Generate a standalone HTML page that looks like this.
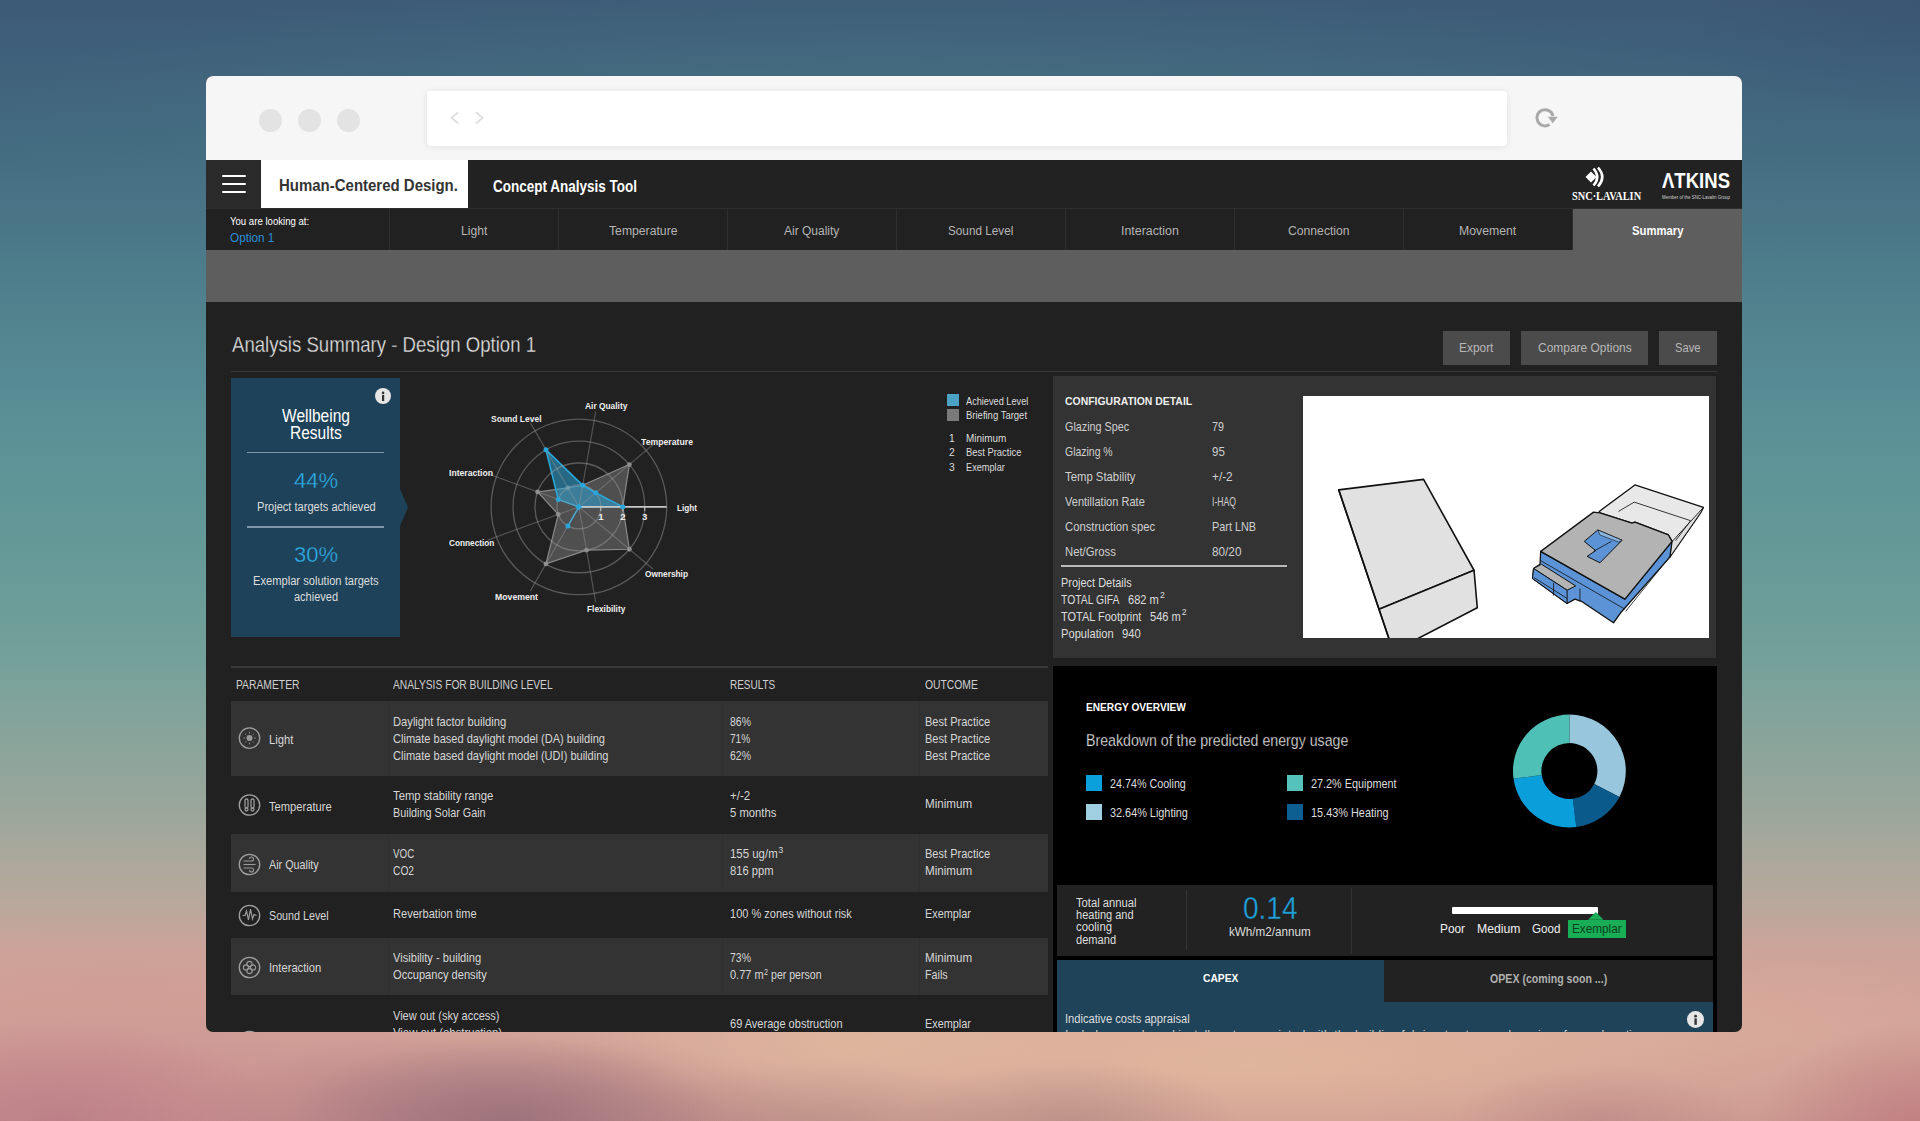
<!DOCTYPE html><html><head><meta charset="utf-8"><style>
html,body{margin:0;padding:0;}
body{width:1920px;height:1121px;overflow:hidden;position:relative;font-family:"Liberation Sans",sans-serif;
background:linear-gradient(180deg,#3d5a76 0px,#42687f 120px,#4e7e8c 280px,#5a9096 420px,#669a98 560px,#72a09a 650px,#84a49b 720px,#98a69b 800px,#a8a89c 850px,#b8a89c 900px,#cca49a 950px,#d2a298 1000px,#d0a098 1040px,#c48e8e 1121px);}
.abs{position:absolute;}
.t{position:absolute;white-space:nowrap;transform-origin:0 0;}
</style></head><body>
<div class="abs" style="left:0;top:0;width:1920px;height:200px;background:radial-gradient(ellipse 900px 150px at 880px 120px,rgba(72,118,134,0.6),rgba(72,118,134,0) 100%),radial-gradient(ellipse 260px 120px at 1920px 0px,rgba(55,82,112,0.55),rgba(55,82,112,0) 100%);"></div>
<div class="abs" style="left:0;top:0;width:1920px;height:1121px;background:radial-gradient(ellipse 900px 140px at 1250px 1065px,rgba(228,186,158,0.85),rgba(228,186,158,0) 100%),radial-gradient(ellipse 260px 90px at 850px 1045px,rgba(224,184,160,0.7),rgba(224,184,160,0) 100%),radial-gradient(ellipse 380px 160px at 120px 1080px,rgba(205,145,145,0.5),rgba(205,145,145,0) 100%);"></div>
<div class="abs" style="left:0;top:0;width:1920px;height:1121px;background:radial-gradient(ellipse 220px 80px at 510px 1118px,rgba(150,110,122,0.7),rgba(150,110,122,0) 100%),radial-gradient(ellipse 320px 90px at 500px 1121px,rgba(165,115,122,0.6),rgba(165,115,122,0) 100%),radial-gradient(ellipse 200px 60px at 820px 1121px,rgba(175,135,130,0.5),rgba(175,135,130,0) 100%),radial-gradient(ellipse 170px 60px at 1070px 1121px,rgba(172,132,128,0.55),rgba(172,132,128,0) 100%),radial-gradient(ellipse 150px 55px at 1600px 1121px,rgba(182,130,130,0.55),rgba(182,130,130,0) 100%),radial-gradient(ellipse 220px 100px at 60px 1121px,rgba(180,115,130,0.55),rgba(180,115,130,0) 100%),radial-gradient(ellipse 160px 100px at 1920px 1121px,rgba(188,118,124,0.65),rgba(188,118,124,0) 100%);"></div>
<div class="abs" style="left:206px;top:76px;width:1536px;height:956px;border-radius:7px;overflow:hidden;background:#212121;"><div class="abs" style="left:-206px;top:-76px;width:1920px;height:1121px;"><div class="abs" style="left:206.00px;top:76.00px;width:1536.00px;height:84.00px;background:#f6f6f6;"></div><div class="abs" style="left:259.0px;top:108.5px;width:23px;height:23px;border-radius:50%;background:#e3e3e3;"></div><div class="abs" style="left:298.0px;top:108.5px;width:23px;height:23px;border-radius:50%;background:#e3e3e3;"></div><div class="abs" style="left:337.0px;top:108.5px;width:23px;height:23px;border-radius:50%;background:#e3e3e3;"></div><div class="abs" style="left:427.00px;top:91.00px;width:1080.00px;height:55.00px;background:#fff;border-radius:4px;box-shadow:0 1px 7px rgba(0,0,0,0.09);"></div><svg class="abs" style="left:0;top:0" width="1920" height="170">
<polyline points="458.3,112.2 451.6,117.75 458.3,123.5" fill="none" stroke="#e0e0e0" stroke-width="2"/>
<polyline points="475.9,112.2 482.6,117.75 475.9,123.5" fill="none" stroke="#e0e0e0" stroke-width="2"/>
<path d="M1549.5,124.5 A8.1,8.1 0 1 1 1552.9,116.0" fill="none" stroke="#a9a9a9" stroke-width="3"/>
<polygon points="1547.9,116.8 1557.8,116.8 1552.7,123.2" fill="#a9a9a9"/>
</svg><div class="abs" style="left:206.00px;top:160.00px;width:1536.00px;height:48.00px;background:#222;"></div><div class="abs" style="left:206.00px;top:160.00px;width:55.00px;height:48.00px;background:#2a2a2a;"></div><div class="abs" style="left:221.50px;top:174.75px;width:24.50px;height:2.50px;background:#fff;border-radius:1px;"></div><div class="abs" style="left:221.50px;top:182.95px;width:24.50px;height:2.50px;background:#fff;border-radius:1px;"></div><div class="abs" style="left:221.50px;top:190.95px;width:24.50px;height:2.50px;background:#fff;border-radius:1px;"></div><div class="abs" style="left:261.00px;top:160.00px;width:207.00px;height:48.00px;background:#fff;"></div><svg class="abs" style="left:1560px;top:160px" width="182" height="48">
<polygon points="25.5,17 31,11.5 36.5,17 31,22.5" fill="#fff"/>
<path d="M33.5,8.5 Q41,17 33.5,25.5" fill="none" stroke="#fff" stroke-width="2.6"/>
<path d="M38,7.5 Q46.5,17 38,26.5" fill="none" stroke="#fff" stroke-width="2.6"/>
</svg><div class="abs" style="left:206.00px;top:208.00px;width:1536.00px;height:42.00px;background:#212121;"></div><div class="abs" style="left:389.00px;top:208.00px;width:1.00px;height:42.00px;background:#2e2e2e;"></div><div class="abs" style="left:558.00px;top:208.00px;width:1.00px;height:42.00px;background:#2e2e2e;"></div><div class="abs" style="left:727.00px;top:208.00px;width:1.00px;height:42.00px;background:#2e2e2e;"></div><div class="abs" style="left:896.00px;top:208.00px;width:1.00px;height:42.00px;background:#2e2e2e;"></div><div class="abs" style="left:1065.00px;top:208.00px;width:1.00px;height:42.00px;background:#2e2e2e;"></div><div class="abs" style="left:1234.00px;top:208.00px;width:1.00px;height:42.00px;background:#2e2e2e;"></div><div class="abs" style="left:1403.00px;top:208.00px;width:1.00px;height:42.00px;background:#2e2e2e;"></div><div class="abs" style="left:1572.00px;top:208.00px;width:1.00px;height:42.00px;background:#2e2e2e;"></div><div class="abs" style="left:1573.00px;top:208.80px;width:169.00px;height:41.20px;background:#5e5e5e;"></div><div class="abs" style="left:206.00px;top:250.00px;width:1536.00px;height:52.00px;background:#5e5e5e;"></div><div class="abs" style="left:206.00px;top:207.60px;width:1536.00px;height:1.20px;background:#2e2e2e;"></div><div class="abs" style="left:231.00px;top:370.50px;width:1486.00px;height:1.50px;background:#383838;"></div><div class="abs" style="left:1443.30px;top:331.25px;width:67.20px;height:33.75px;background:#4b4b4b;"></div><div class="abs" style="left:1521.00px;top:331.25px;width:126.70px;height:33.75px;background:#4b4b4b;"></div><div class="abs" style="left:1658.60px;top:331.25px;width:58.40px;height:33.75px;background:#4b4b4b;"></div><div class="abs" style="left:231.00px;top:378.00px;width:169.30px;height:258.80px;background:#1e4259;"></div><svg class="abs" style="left:395px;top:485px" width="20" height="45"><polygon points="5,4 13,22.6 5,41" fill="#1e4259"/></svg><div class="abs" style="left:246.70px;top:451.90px;width:137.60px;height:1.50px;background:#7f97a6;"></div><div class="abs" style="left:246.70px;top:526.10px;width:137.60px;height:1.50px;background:#7f97a6;"></div><div class="abs" style="left:375px;top:387.8px;width:16.2px;height:16.2px;border-radius:50%;background:#e6e6e6;"></div><svg class="abs" style="left:375px;top:387.8px" width="17" height="17"><circle cx="8.1" cy="4.9" r="1.3" fill="#333"/><rect x="7.0" y="7" width="2.2" height="6" fill="#333"/></svg><svg class="abs" style="left:0;top:0" width="1920" height="700"><polygon points="622.80,506.90 629.34,464.57 582.71,485.28 567.92,487.89 537.65,491.89 558.27,514.41 545.97,563.93 586.52,550.13 629.34,549.23" fill="rgba(150,150,150,0.40)" stroke="#8a8a8a" stroke-width="1.2"/><circle cx="622.80" cy="506.90" r="2.4" fill="#8a8a8a"/><circle cx="629.34" cy="464.57" r="2.4" fill="#8a8a8a"/><circle cx="582.71" cy="485.28" r="2.4" fill="#8a8a8a"/><circle cx="567.92" cy="487.89" r="2.4" fill="#8a8a8a"/><circle cx="537.65" cy="491.89" r="2.4" fill="#8a8a8a"/><circle cx="558.27" cy="514.41" r="2.4" fill="#8a8a8a"/><circle cx="545.97" cy="563.93" r="2.4" fill="#8a8a8a"/><circle cx="586.52" cy="550.13" r="2.4" fill="#8a8a8a"/><circle cx="629.34" cy="549.23" r="2.4" fill="#8a8a8a"/><polygon points="622.80,506.90 595.71,492.79 582.71,485.28 545.98,449.87 558.27,499.39 578.90,506.90 567.92,525.91 578.90,506.90 578.90,506.90" fill="rgba(45,165,215,0.55)" stroke="#2aa6da" stroke-width="1.6"/><circle cx="578.9" cy="506.9" r="21.95" fill="none" stroke="rgba(160,160,160,0.45)" stroke-width="1.3"/><circle cx="578.9" cy="506.9" r="43.90" fill="none" stroke="rgba(160,160,160,0.45)" stroke-width="1.3"/><circle cx="578.9" cy="506.9" r="65.85" fill="none" stroke="rgba(160,160,160,0.45)" stroke-width="1.3"/><circle cx="578.9" cy="506.9" r="87.80" fill="none" stroke="rgba(160,160,160,0.45)" stroke-width="1.3"/><line x1="578.9" y1="506.9" x2="653.21" y2="444.55" stroke="rgba(150,150,150,0.42)" stroke-width="1.2"/><line x1="578.9" y1="506.9" x2="595.74" y2="411.37" stroke="rgba(150,150,150,0.42)" stroke-width="1.2"/><line x1="578.9" y1="506.9" x2="530.40" y2="422.90" stroke="rgba(150,150,150,0.42)" stroke-width="1.2"/><line x1="578.9" y1="506.9" x2="487.75" y2="473.72" stroke="rgba(150,150,150,0.42)" stroke-width="1.2"/><line x1="578.9" y1="506.9" x2="487.75" y2="540.08" stroke="rgba(150,150,150,0.42)" stroke-width="1.2"/><line x1="578.9" y1="506.9" x2="530.40" y2="590.90" stroke="rgba(150,150,150,0.42)" stroke-width="1.2"/><line x1="578.9" y1="506.9" x2="595.74" y2="602.43" stroke="rgba(150,150,150,0.42)" stroke-width="1.2"/><line x1="578.9" y1="506.9" x2="653.21" y2="569.25" stroke="rgba(150,150,150,0.42)" stroke-width="1.2"/><line x1="578.9" y1="506.9" x2="666.70" y2="506.9" stroke="#c8c8c8" stroke-width="1.6"/><line x1="600.85" y1="506.9" x2="600.85" y2="510.9" stroke="#c8c8c8" stroke-width="1"/><line x1="622.80" y1="506.9" x2="622.80" y2="510.9" stroke="#c8c8c8" stroke-width="1"/><line x1="644.75" y1="506.9" x2="644.75" y2="510.9" stroke="#c8c8c8" stroke-width="1"/><circle cx="622.80" cy="506.90" r="2.5" fill="#2aa6da"/><circle cx="595.71" cy="492.79" r="2.5" fill="#2aa6da"/><circle cx="582.71" cy="485.28" r="2.5" fill="#2aa6da"/><circle cx="545.98" cy="449.87" r="2.5" fill="#2aa6da"/><circle cx="558.27" cy="499.39" r="2.5" fill="#2aa6da"/><circle cx="578.90" cy="506.90" r="2.5" fill="#2aa6da"/><circle cx="567.92" cy="525.91" r="2.5" fill="#2aa6da"/><circle cx="578.90" cy="506.90" r="2.5" fill="#2aa6da"/><circle cx="578.90" cy="506.90" r="2.5" fill="#2aa6da"/></svg><div class="abs" style="left:947.00px;top:394.00px;width:12.00px;height:12.00px;background:#4aa3c4;"></div><div class="abs" style="left:947.00px;top:409.00px;width:12.00px;height:11.60px;background:#7a7a7a;"></div><div class="abs" style="left:1052.80px;top:376.00px;width:663.20px;height:282.00px;background:#333;"></div><div class="abs" style="left:1061.00px;top:564.50px;width:225.70px;height:2.00px;background:#b9b9b9;"></div><div class="abs" style="left:1302.80px;top:395.50px;width:406.70px;height:242.50px;background:#fff;"></div><svg class="abs" style="left:0;top:0" width="1920" height="700"><defs><clipPath id="imgclip"><rect x="1302.8" y="395.5" width="406.7" height="242.5"/></clipPath></defs><g clip-path="url(#imgclip)"><polygon points="1338.69,489.86 1423.58,479.38 1474.02,570.26 1379.01,609.21" fill="#e1e1e1" stroke="#111" stroke-width="1.6" stroke-linejoin="round"/><polygon points="1379.01,609.21 1474.02,570.26 1477.27,607.72 1372.40,662.15 1396.87,662.15" fill="#e1e1e1" stroke="#111" stroke-width="1.6" stroke-linejoin="round"/><line x1="1338.69" y1="489.86" x2="1396.87" y2="662.15" stroke="#111" stroke-width="1.6"/><polygon points="1599.23,511.40 1634.92,484.99 1703.44,507.40 1700.59,512.83 1669.89,557.08 1672.03,541.38 1668.47,534.95 1634.92,522.11 1632.06,523.10 1599.94,512.83" fill="#e8e8e8" stroke="#111" stroke-width="1.3" stroke-linejoin="round"/><polygon points="1703.44,507.40 1700.59,512.83 1669.89,557.08 1671.61,542.09 1690.59,521.39" fill="#dedede" stroke="#111" stroke-width="0.9" stroke-linejoin="round"/><polyline points="1618.50,511.40 1634.20,502.12 1690.59,520.68 1675.60,540.66" fill="none" stroke="#222" stroke-width="0.9"/><polygon points="1540.70,551.37 1624.93,599.19 1672.03,541.38 1669.89,557.08 1620.64,612.76 1613.50,622.75 1581.38,601.33 1577.10,599.91 1574.96,599.19 1567.11,603.48 1532.56,578.49 1533.56,568.50 1539.99,564.22" fill="#5b93d6" stroke="#111" stroke-width="1.3" stroke-linejoin="round"/><polygon points="1533.56,568.50 1541.41,564.22 1575.67,585.92 1567.11,590.20" fill="#b4b4b4" stroke="#111" stroke-width="1.0" stroke-linejoin="round"/><polygon points="1533.56,568.50 1567.11,590.20 1567.11,603.48 1532.56,578.49" fill="#5b93d6" stroke="#111" stroke-width="1.0" stroke-linejoin="round"/><polygon points="1540.70,551.37 1593.52,512.11 1599.94,512.83 1632.06,523.10 1634.92,522.11 1668.47,534.95 1672.03,541.38 1624.93,599.19" fill="#b3b3b3" stroke="#111" stroke-width="1.3" stroke-linejoin="round"/><polygon points="1584.24,541.38 1597.80,529.96 1622.07,540.24 1599.94,562.79 1587.09,556.37 1595.66,550.66" fill="#5b93d6" stroke="#111" stroke-width="1.0" stroke-linejoin="round"/><polygon points="1597.80,529.96 1622.07,540.24 1618.50,542.09 1599.94,534.95" fill="#8db5e2" stroke="#111" stroke-width="0.6" stroke-linejoin="round"/><g stroke="#111" stroke-width="0.8" fill="none"><line x1="1540.70" y1="560.65" x2="1624.93" y2="609.19"/><line x1="1553.55" y1="582.78" x2="1553.55" y2="595.62"/><line x1="1579.96" y1="588.49" x2="1579.96" y2="601.33"/><line x1="1534.28" y1="577.78" x2="1567.11" y2="598.48"/><line x1="1625.64" y1="611.33" x2="1670.61" y2="555.65"/><line x1="1593.52" y1="551.37" x2="1611.36" y2="541.38"/></g></g></g></svg><div class="abs" style="left:1052.80px;top:666.00px;width:663.90px;height:366.00px;background:#000;"></div><div class="abs" style="left:1085.90px;top:775.30px;width:16.00px;height:16.00px;background:#0aa0dc;"></div><div class="abs" style="left:1085.90px;top:804.40px;width:16.00px;height:16.00px;background:#a0cfe1;"></div><div class="abs" style="left:1286.90px;top:775.30px;width:16.00px;height:16.00px;background:#55c3bc;"></div><div class="abs" style="left:1286.90px;top:804.40px;width:16.00px;height:16.00px;background:#0c5f90;"></div><svg class="abs" style="left:0;top:0" width="1920" height="900"><path d="M1569.40,714.60 A56.4,56.4 0 0 1 1619.43,797.04 L1594.24,783.93 A28,28 0 0 0 1569.40,743.00 Z" fill="#98c6dc"/><path d="M1619.43,797.04 A56.4,56.4 0 0 1 1576.27,826.98 L1572.81,798.79 A28,28 0 0 0 1594.24,783.93 Z" fill="#0b5a8c"/><path d="M1576.27,826.98 A56.4,56.4 0 0 1 1513.55,778.85 L1541.67,774.90 A28,28 0 0 0 1572.81,798.79 Z" fill="#0a9edb"/><path d="M1513.55,778.85 A56.4,56.4 0 0 1 1569.40,714.60 L1569.40,743.00 A28,28 0 0 0 1541.67,774.90 Z" fill="#4fc0b6"/></svg><div class="abs" style="left:1057.00px;top:884.50px;width:656.00px;height:71.50px;background:#222;"></div><div class="abs" style="left:1185.60px;top:890.00px;width:1.20px;height:60.00px;background:#333;"></div><div class="abs" style="left:1350.70px;top:887.50px;width:1.20px;height:65.00px;background:#333;"></div><div class="abs" style="left:1452.00px;top:907.30px;width:145.80px;height:6.70px;background:#fff;border-radius:1px;"></div><svg class="abs" style="left:1580px;top:905px" width="30" height="20"><polygon points="8,14.8 15.8,7 23.6,14.8" fill="#19ad55"/></svg><div class="abs" style="left:1567.70px;top:919.80px;width:58.30px;height:18.00px;background:#19ad55;"></div><div class="abs" style="left:1057.00px;top:959.80px;width:327.30px;height:72.20px;background:#1f4359;"></div><div class="abs" style="left:1384.30px;top:959.80px;width:328.70px;height:42.20px;background:#222;"></div><div class="abs" style="left:1384.30px;top:1002.00px;width:328.70px;height:30.00px;background:#1f4359;"></div><div class="abs" style="left:1686.7px;top:1010.9px;width:17.2px;height:17.2px;border-radius:50%;background:#e6e6e6;"></div><svg class="abs" style="left:1686.7px;top:1010.9px" width="18" height="18"><circle cx="8.6" cy="5.2" r="1.4" fill="#333"/><rect x="7.4" y="7.4" width="2.4" height="6.4" fill="#333"/></svg><div class="abs" style="left:231.00px;top:666.20px;width:816.70px;height:1.80px;background:#383838;"></div><div class="abs" style="left:231.00px;top:701.00px;width:816.70px;height:75.00px;background:#333;"></div><div class="abs" style="left:388.00px;top:701.00px;width:1.00px;height:75.00px;background:#2f2f2f;"></div><div class="abs" style="left:722.00px;top:701.00px;width:1.00px;height:75.00px;background:#303030;"></div><div class="abs" style="left:919.00px;top:701.00px;width:1.00px;height:75.00px;background:#2f2f2f;"></div><div class="abs" style="left:231.00px;top:834.00px;width:816.70px;height:58.00px;background:#333;"></div><div class="abs" style="left:388.00px;top:834.00px;width:1.00px;height:58.00px;background:#2f2f2f;"></div><div class="abs" style="left:722.00px;top:834.00px;width:1.00px;height:58.00px;background:#303030;"></div><div class="abs" style="left:919.00px;top:834.00px;width:1.00px;height:58.00px;background:#2f2f2f;"></div><div class="abs" style="left:231.00px;top:938.00px;width:816.70px;height:57.40px;background:#333;"></div><div class="abs" style="left:388.00px;top:938.00px;width:1.00px;height:57.40px;background:#2f2f2f;"></div><div class="abs" style="left:722.00px;top:938.00px;width:1.00px;height:57.40px;background:#303030;"></div><div class="abs" style="left:919.00px;top:938.00px;width:1.00px;height:57.40px;background:#2f2f2f;"></div><svg class="abs" style="left:0;top:0" width="1920" height="1100"><circle cx="249.5" cy="738.1" r="10.2" fill="none" stroke="#a0a0a0" stroke-width="1.3"/><circle cx="249.5" cy="805" r="10.2" fill="none" stroke="#a0a0a0" stroke-width="1.3"/><circle cx="249.5" cy="864.5" r="10.2" fill="none" stroke="#a0a0a0" stroke-width="1.3"/><circle cx="249.5" cy="915.5" r="10.2" fill="none" stroke="#a0a0a0" stroke-width="1.3"/><circle cx="249.5" cy="967.5" r="10.2" fill="none" stroke="#a0a0a0" stroke-width="1.3"/><circle cx="249.5" cy="1041.5" r="10.2" fill="none" stroke="#a0a0a0" stroke-width="1.3"/><circle cx="249.5" cy="738.1" r="3" fill="#9a9a9a"/><line x1="254.00" y1="738.10" x2="255.70" y2="738.10" stroke="#8c8c8c" stroke-width="1"/><line x1="252.68" y1="741.28" x2="253.88" y2="742.48" stroke="#8c8c8c" stroke-width="1"/><line x1="249.50" y1="742.60" x2="249.50" y2="744.30" stroke="#8c8c8c" stroke-width="1"/><line x1="246.32" y1="741.28" x2="245.12" y2="742.48" stroke="#8c8c8c" stroke-width="1"/><line x1="245.00" y1="738.10" x2="243.30" y2="738.10" stroke="#8c8c8c" stroke-width="1"/><line x1="246.32" y1="734.92" x2="245.12" y2="733.72" stroke="#8c8c8c" stroke-width="1"/><line x1="249.50" y1="733.60" x2="249.50" y2="731.90" stroke="#8c8c8c" stroke-width="1"/><line x1="252.68" y1="734.92" x2="253.88" y2="733.72" stroke="#8c8c8c" stroke-width="1"/><g fill="none" stroke="#9a9a9a" stroke-width="1.3"><rect x="245" y="799" width="3" height="9" rx="1.5"/><rect x="251" y="799" width="3" height="9" rx="1.5"/><circle cx="246.5" cy="809.5" r="1.5"/><circle cx="252.5" cy="809.5" r="1.5"/></g><g fill="none" stroke="#9a9a9a" stroke-width="1.1"><path d="M243.5,861 h8 a2,2 0 1 0 -2,-2"/><path d="M243.5,864.5 h12"/><path d="M243.5,868 h8 a2,2 0 1 1 -2,2"/></g><polyline points="242.5,915.5 245,915.5 246.5,911 248.5,920 250.5,909 252.5,919 254,914.5 256.5,915.5" fill="none" stroke="#9a9a9a" stroke-width="1.2"/><g fill="none" stroke="#9a9a9a" stroke-width="1.1"><circle cx="249.5" cy="964" r="2.6"/><circle cx="249.5" cy="971" r="2.6"/><circle cx="246" cy="967.5" r="2.6"/><circle cx="253" cy="967.5" r="2.6"/></g></svg><span class="t" style="left:278.75px;top:177.56px;font:700 15.99px/1 'Liberation Sans',sans-serif;color:#333;transform:scaleX(0.9370);">Human-Centered Design.</span>
<span class="t" style="left:492.70px;top:178.61px;font:700 15.99px/1 'Liberation Sans',sans-serif;color:#fff;transform:scaleX(0.8447);">Concept Analysis Tool</span>
<span class="t" style="left:1572.00px;top:190.82px;font:700 11.91px/1 'Liberation Serif',sans-serif;color:#fff;transform:scaleX(0.8677);">SNC·LAVALIN</span>
<span class="t" style="left:1662.00px;top:170.44px;font:700 21.80px/1 'Liberation Sans',sans-serif;color:#fff;transform:scaleX(0.8508);">ΛTKINS</span>
<span class="t" style="left:1662.00px;top:196.46px;font:400 4.65px/1 'Liberation Sans',sans-serif;color:#cfcfcf;transform:scaleX(0.9518);">Member of the SNC-Lavalin Group</span>
<span class="t" style="left:230.20px;top:216.42px;font:400 10.61px/1 'Liberation Sans',sans-serif;color:#fff;transform:scaleX(0.9052);">You are looking at:</span>
<span class="t" style="left:230.20px;top:231.65px;font:400 12.94px/1 'Liberation Sans',sans-serif;color:#2a8fd6;transform:scaleX(0.9069);">Option 1</span>
<span class="t" style="left:460.88px;top:223.83px;font:400 13.66px/1 'Liberation Sans',sans-serif;color:#b4b4b4;transform:scaleX(0.8864);">Light</span>
<span class="t" style="left:608.75px;top:223.83px;font:400 13.66px/1 'Liberation Sans',sans-serif;color:#b4b4b4;transform:scaleX(0.8935);">Temperature</span>
<span class="t" style="left:784.35px;top:223.83px;font:400 13.66px/1 'Liberation Sans',sans-serif;color:#b4b4b4;transform:scaleX(0.8780);">Air Quality</span>
<span class="t" style="left:948.35px;top:223.83px;font:400 13.66px/1 'Liberation Sans',sans-serif;color:#b4b4b4;transform:scaleX(0.8600);">Sound Level</span>
<span class="t" style="left:1121.10px;top:223.83px;font:400 13.66px/1 'Liberation Sans',sans-serif;color:#b4b4b4;transform:scaleX(0.9064);">Interaction</span>
<span class="t" style="left:1288.20px;top:223.83px;font:400 13.66px/1 'Liberation Sans',sans-serif;color:#b4b4b4;transform:scaleX(0.8916);">Connection</span>
<span class="t" style="left:1459.40px;top:223.83px;font:400 13.66px/1 'Liberation Sans',sans-serif;color:#b4b4b4;transform:scaleX(0.8972);">Movement</span>
<span class="t" style="left:1632.25px;top:223.83px;font:700 13.66px/1 'Liberation Sans',sans-serif;color:#fff;transform:scaleX(0.8274);">Summary</span>
<span class="t" style="left:231.70px;top:334.51px;font:400 21.37px/1 'Liberation Sans',sans-serif;color:#e2e2e2;transform:scaleX(0.8711);-webkit-text-stroke:0.3px #212121;">Analysis Summary - Design Option 1</span>
<span class="t" style="left:1459.40px;top:342.32px;font:400 12.50px/1 'Liberation Sans',sans-serif;color:#b8b8b8;transform:scaleX(0.9522);">Export</span>
<span class="t" style="left:1537.50px;top:342.32px;font:400 12.50px/1 'Liberation Sans',sans-serif;color:#b8b8b8;transform:scaleX(0.9570);">Compare Options</span>
<span class="t" style="left:1675.00px;top:342.32px;font:400 12.50px/1 'Liberation Sans',sans-serif;color:#b8b8b8;transform:scaleX(0.8985);">Save</span>
<span class="t" style="left:282.20px;top:408.33px;font:400 17.44px/1 'Liberation Sans',sans-serif;color:#fff;transform:scaleX(0.8917);">Wellbeing</span>
<span class="t" style="left:290.35px;top:424.73px;font:400 17.44px/1 'Liberation Sans',sans-serif;color:#fff;transform:scaleX(0.8892);">Results</span>
<span class="t" style="left:293.90px;top:468.86px;font:400 22.97px/1 'Liberation Sans',sans-serif;color:#2eb0ea;transform:scaleX(0.9578);-webkit-text-stroke:0.35px #1e4259;">44%</span>
<span class="t" style="left:256.65px;top:499.82px;font:400 13.08px/1 'Liberation Sans',sans-serif;color:#ddd;transform:scaleX(0.8460);">Project targets achieved</span>
<span class="t" style="left:293.90px;top:542.86px;font:400 22.97px/1 'Liberation Sans',sans-serif;color:#2eb0ea;transform:scaleX(0.9578);-webkit-text-stroke:0.35px #1e4259;">30%</span>
<span class="t" style="left:253.15px;top:573.92px;font:400 13.08px/1 'Liberation Sans',sans-serif;color:#ddd;transform:scaleX(0.8518);">Exemplar solution targets</span>
<span class="t" style="left:293.90px;top:590.22px;font:400 13.08px/1 'Liberation Sans',sans-serif;color:#ddd;transform:scaleX(0.8405);">achieved</span>
<span class="t" style="left:584.60px;top:401.43px;font:700 9.88px/1 'Liberation Sans',sans-serif;color:#eee;transform:scaleX(0.8491);">Air Quality</span>
<span class="t" style="left:491.00px;top:413.93px;font:700 9.88px/1 'Liberation Sans',sans-serif;color:#eee;transform:scaleX(0.8619);">Sound Level</span>
<span class="t" style="left:641.00px;top:436.93px;font:700 9.88px/1 'Liberation Sans',sans-serif;color:#eee;transform:scaleX(0.8801);">Temperature</span>
<span class="t" style="left:449.00px;top:467.93px;font:700 9.88px/1 'Liberation Sans',sans-serif;color:#eee;transform:scaleX(0.8716);">Interaction</span>
<span class="t" style="left:677.00px;top:503.43px;font:700 9.88px/1 'Liberation Sans',sans-serif;color:#eee;transform:scaleX(0.8289);">Light</span>
<span class="t" style="left:448.60px;top:537.93px;font:700 9.88px/1 'Liberation Sans',sans-serif;color:#eee;transform:scaleX(0.8360);">Connection</span>
<span class="t" style="left:645.00px;top:568.93px;font:700 9.88px/1 'Liberation Sans',sans-serif;color:#eee;transform:scaleX(0.8427);">Ownership</span>
<span class="t" style="left:495.00px;top:591.93px;font:700 9.88px/1 'Liberation Sans',sans-serif;color:#eee;transform:scaleX(0.8805);">Movement</span>
<span class="t" style="left:586.75px;top:603.93px;font:700 9.88px/1 'Liberation Sans',sans-serif;color:#eee;transform:scaleX(0.8409);">Flexibility</span>
<span class="t" style="left:598.19px;top:512.38px;font:700 9.59px/1 'Liberation Sans',sans-serif;color:#eee;">1</span>
<span class="t" style="left:620.14px;top:512.38px;font:700 9.59px/1 'Liberation Sans',sans-serif;color:#eee;">2</span>
<span class="t" style="left:642.09px;top:512.38px;font:700 9.59px/1 'Liberation Sans',sans-serif;color:#eee;">3</span>
<span class="t" style="left:965.70px;top:396.76px;font:400 10.32px/1 'Liberation Sans',sans-serif;color:#ddd;transform:scaleX(0.8907);">Achieved Level</span>
<span class="t" style="left:965.70px;top:411.16px;font:400 10.32px/1 'Liberation Sans',sans-serif;color:#ddd;transform:scaleX(0.9204);">Briefing Target</span>
<span class="t" style="left:949.00px;top:433.76px;font:400 10.32px/1 'Liberation Sans',sans-serif;color:#ddd;">1</span>
<span class="t" style="left:965.70px;top:433.76px;font:400 10.32px/1 'Liberation Sans',sans-serif;color:#ddd;transform:scaleX(0.9612);">Minimum</span>
<span class="t" style="left:949.00px;top:448.26px;font:400 10.32px/1 'Liberation Sans',sans-serif;color:#ddd;">2</span>
<span class="t" style="left:965.70px;top:448.26px;font:400 10.32px/1 'Liberation Sans',sans-serif;color:#ddd;transform:scaleX(0.9119);">Best Practice</span>
<span class="t" style="left:949.00px;top:462.76px;font:400 10.32px/1 'Liberation Sans',sans-serif;color:#ddd;">3</span>
<span class="t" style="left:965.70px;top:462.76px;font:400 10.32px/1 'Liberation Sans',sans-serif;color:#ddd;transform:scaleX(0.8908);">Exemplar</span>
<span class="t" style="left:1064.75px;top:395.05px;font:700 11.63px/1 'Liberation Sans',sans-serif;color:#eee;transform:scaleX(0.8979);">CONFIGURATION DETAIL</span>
<span class="t" style="left:1064.75px;top:420.73px;font:400 12.72px/1 'Liberation Sans',sans-serif;color:#cfcfcf;transform:scaleX(0.8471);">Glazing Spec</span>
<span class="t" style="left:1211.90px;top:420.73px;font:400 12.72px/1 'Liberation Sans',sans-serif;color:#cfcfcf;transform:scaleX(0.8422);">79</span>
<span class="t" style="left:1064.75px;top:445.73px;font:400 12.72px/1 'Liberation Sans',sans-serif;color:#cfcfcf;transform:scaleX(0.8222);">Glazing %</span>
<span class="t" style="left:1211.90px;top:445.73px;font:400 12.72px/1 'Liberation Sans',sans-serif;color:#cfcfcf;transform:scaleX(0.9059);">95</span>
<span class="t" style="left:1064.75px;top:470.73px;font:400 12.72px/1 'Liberation Sans',sans-serif;color:#cfcfcf;transform:scaleX(0.8903);">Temp Stability</span>
<span class="t" style="left:1211.90px;top:470.73px;font:400 12.72px/1 'Liberation Sans',sans-serif;color:#cfcfcf;transform:scaleX(0.9261);">+/-2</span>
<span class="t" style="left:1064.75px;top:495.73px;font:400 12.72px/1 'Liberation Sans',sans-serif;color:#cfcfcf;transform:scaleX(0.8681);">Ventillation Rate</span>
<span class="t" style="left:1211.90px;top:495.73px;font:400 12.72px/1 'Liberation Sans',sans-serif;color:#cfcfcf;transform:scaleX(0.6801);">I-HAQ</span>
<span class="t" style="left:1064.75px;top:520.73px;font:400 12.72px/1 'Liberation Sans',sans-serif;color:#cfcfcf;transform:scaleX(0.8852);">Construction spec</span>
<span class="t" style="left:1211.90px;top:520.73px;font:400 12.72px/1 'Liberation Sans',sans-serif;color:#cfcfcf;transform:scaleX(0.8537);">Part LNB</span>
<span class="t" style="left:1064.75px;top:545.73px;font:400 12.72px/1 'Liberation Sans',sans-serif;color:#cfcfcf;transform:scaleX(0.8885);">Net/Gross</span>
<span class="t" style="left:1211.90px;top:545.73px;font:400 12.72px/1 'Liberation Sans',sans-serif;color:#cfcfcf;transform:scaleX(0.9249);">80/20</span>
<span class="t" style="left:1060.90px;top:577.14px;font:400 12.35px/1 'Liberation Sans',sans-serif;color:#ddd;transform:scaleX(0.8872);">Project Details</span>
<span class="t" style="left:1060.90px;top:593.74px;font:400 12.35px/1 'Liberation Sans',sans-serif;color:#ddd;transform:scaleX(0.8391);">TOTAL GIFA</span>
<span class="t" style="left:1128.30px;top:593.74px;font:400 12.35px/1 'Liberation Sans',sans-serif;color:#ddd;transform:scaleX(0.8978);">682 m</span>
<span class="t" style="left:1159.90px;top:591.02px;font:400 8.72px/1 'Liberation Sans',sans-serif;color:#ddd;">2</span>
<span class="t" style="left:1060.90px;top:610.64px;font:400 12.35px/1 'Liberation Sans',sans-serif;color:#ddd;transform:scaleX(0.8900);">TOTAL Footprint</span>
<span class="t" style="left:1150.25px;top:610.64px;font:400 12.35px/1 'Liberation Sans',sans-serif;color:#ddd;transform:scaleX(0.8978);">546 m</span>
<span class="t" style="left:1181.80px;top:607.92px;font:400 8.72px/1 'Liberation Sans',sans-serif;color:#ddd;">2</span>
<span class="t" style="left:1060.90px;top:628.04px;font:400 12.35px/1 'Liberation Sans',sans-serif;color:#ddd;transform:scaleX(0.9034);">Population</span>
<span class="t" style="left:1122.20px;top:628.04px;font:400 12.35px/1 'Liberation Sans',sans-serif;color:#ddd;transform:scaleX(0.9080);">940</span>
<span class="t" style="left:1085.90px;top:700.63px;font:700 11.77px/1 'Liberation Sans',sans-serif;color:#fff;transform:scaleX(0.8609);">ENERGY OVERVIEW</span>
<span class="t" style="left:1085.90px;top:731.80px;font:400 16.35px/1 'Liberation Sans',sans-serif;color:#e2e2e2;transform:scaleX(0.8669);-webkit-text-stroke:0.25px #000;">Breakdown of the predicted energy usage</span>
<span class="t" style="left:1110.25px;top:777.85px;font:400 12.94px/1 'Liberation Sans',sans-serif;color:#ddd;transform:scaleX(0.8303);">24.74% Cooling</span>
<span class="t" style="left:1110.25px;top:806.95px;font:400 12.94px/1 'Liberation Sans',sans-serif;color:#ddd;transform:scaleX(0.8394);">32.64% Lighting</span>
<span class="t" style="left:1310.70px;top:777.85px;font:400 12.94px/1 'Liberation Sans',sans-serif;color:#ddd;transform:scaleX(0.8382);">27.2% Equipment</span>
<span class="t" style="left:1310.70px;top:806.95px;font:400 12.94px/1 'Liberation Sans',sans-serif;color:#ddd;transform:scaleX(0.8417);">15.43% Heating</span>
<span class="t" style="left:1075.80px;top:897.26px;font:400 12.21px/1 'Liberation Sans',sans-serif;color:#ddd;transform:scaleX(0.9205);">Total annual</span>
<span class="t" style="left:1075.80px;top:909.36px;font:400 12.21px/1 'Liberation Sans',sans-serif;color:#ddd;transform:scaleX(0.9026);">heating and</span>
<span class="t" style="left:1075.80px;top:921.46px;font:400 12.21px/1 'Liberation Sans',sans-serif;color:#ddd;transform:scaleX(0.9321);">cooling</span>
<span class="t" style="left:1075.80px;top:933.56px;font:400 12.21px/1 'Liberation Sans',sans-serif;color:#ddd;transform:scaleX(0.9082);">demand</span>
<span class="t" style="left:1243.00px;top:893.39px;font:400 31.54px/1 'Liberation Sans',sans-serif;color:#1ea0dc;transform:scaleX(0.8881);-webkit-text-stroke:0.3px #222;">0.14</span>
<span class="t" style="left:1229.20px;top:926.49px;font:400 12.06px/1 'Liberation Sans',sans-serif;color:#ddd;transform:scaleX(0.9673);">kWh/m2/annum</span>
<span class="t" style="left:1440.30px;top:923.49px;font:400 12.06px/1 'Liberation Sans',sans-serif;color:#eee;transform:scaleX(0.9824);">Poor</span>
<span class="t" style="left:1476.60px;top:923.49px;font:400 12.06px/1 'Liberation Sans',sans-serif;color:#eee;transform:scaleX(1.0129);">Medium</span>
<span class="t" style="left:1531.70px;top:923.49px;font:400 12.06px/1 'Liberation Sans',sans-serif;color:#eee;transform:scaleX(0.9637);">Good</span>
<span class="t" style="left:1571.90px;top:923.49px;font:400 12.06px/1 'Liberation Sans',sans-serif;color:#0b4221;transform:scaleX(0.9768);">Exemplar</span>
<span class="t" style="left:1203.00px;top:973.37px;font:700 10.90px/1 'Liberation Sans',sans-serif;color:#fff;transform:scaleX(0.9408);">CAPEX</span>
<span class="t" style="left:1490.00px;top:972.74px;font:700 12.35px/1 'Liberation Sans',sans-serif;color:#b0b0b0;transform:scaleX(0.8588);">OPEX (coming soon ...)</span>
<span class="t" style="left:1064.70px;top:1012.69px;font:400 12.65px/1 'Liberation Sans',sans-serif;color:#ddd;transform:scaleX(0.8827);">Indicative costs appraisal</span>
<span class="t" style="left:1064.70px;top:1029.49px;font:400 12.65px/1 'Liberation Sans',sans-serif;color:#ccc;transform:scaleX(0.9827);">Includes supply and install costs associated with the building fabric, structure and services for each option</span>
<span class="t" style="left:235.70px;top:678.99px;font:400 12.06px/1 'Liberation Sans',sans-serif;color:#cfcfcf;transform:scaleX(0.8572);">PARAMETER</span>
<span class="t" style="left:393.00px;top:678.99px;font:400 12.06px/1 'Liberation Sans',sans-serif;color:#cfcfcf;transform:scaleX(0.8494);">ANALYSIS FOR BUILDING LEVEL</span>
<span class="t" style="left:729.60px;top:678.99px;font:400 12.06px/1 'Liberation Sans',sans-serif;color:#cfcfcf;transform:scaleX(0.8268);">RESULTS</span>
<span class="t" style="left:925.30px;top:678.99px;font:400 12.06px/1 'Liberation Sans',sans-serif;color:#cfcfcf;transform:scaleX(0.8592);">OUTCOME</span>
<span class="t" style="left:268.60px;top:733.95px;font:400 12.94px/1 'Liberation Sans',sans-serif;color:#d6d6d6;transform:scaleX(0.8708);">Light</span>
<span class="t" style="left:268.60px;top:800.85px;font:400 12.94px/1 'Liberation Sans',sans-serif;color:#d6d6d6;transform:scaleX(0.8630);">Temperature</span>
<span class="t" style="left:268.60px;top:858.95px;font:400 12.94px/1 'Liberation Sans',sans-serif;color:#d6d6d6;transform:scaleX(0.8339);">Air Quality</span>
<span class="t" style="left:268.60px;top:910.35px;font:400 12.94px/1 'Liberation Sans',sans-serif;color:#d6d6d6;transform:scaleX(0.8282);">Sound Level</span>
<span class="t" style="left:268.60px;top:961.95px;font:400 12.94px/1 'Liberation Sans',sans-serif;color:#d6d6d6;transform:scaleX(0.8651);">Interaction</span>
<span class="t" style="left:393.00px;top:715.75px;font:400 12.94px/1 'Liberation Sans',sans-serif;color:#d6d6d6;transform:scaleX(0.8644);">Daylight factor building</span>
<span class="t" style="left:393.00px;top:732.75px;font:400 12.94px/1 'Liberation Sans',sans-serif;color:#d6d6d6;transform:scaleX(0.8543);">Climate based daylight model (DA) building</span>
<span class="t" style="left:393.00px;top:749.65px;font:400 12.94px/1 'Liberation Sans',sans-serif;color:#d6d6d6;transform:scaleX(0.8536);">Climate based daylight model (UDI) building</span>
<span class="t" style="left:393.00px;top:790.35px;font:400 12.94px/1 'Liberation Sans',sans-serif;color:#d6d6d6;transform:scaleX(0.8720);">Temp stability range</span>
<span class="t" style="left:393.00px;top:807.15px;font:400 12.94px/1 'Liberation Sans',sans-serif;color:#d6d6d6;transform:scaleX(0.8362);">Building Solar Gain</span>
<span class="t" style="left:393.00px;top:848.35px;font:400 12.94px/1 'Liberation Sans',sans-serif;color:#d6d6d6;transform:scaleX(0.7571);">VOC</span>
<span class="t" style="left:393.00px;top:865.35px;font:400 12.94px/1 'Liberation Sans',sans-serif;color:#d6d6d6;transform:scaleX(0.7904);">CO2</span>
<span class="t" style="left:393.00px;top:907.95px;font:400 12.94px/1 'Liberation Sans',sans-serif;color:#d6d6d6;transform:scaleX(0.8549);">Reverbation time</span>
<span class="t" style="left:393.00px;top:951.75px;font:400 12.94px/1 'Liberation Sans',sans-serif;color:#d6d6d6;transform:scaleX(0.8588);">Visibility - building</span>
<span class="t" style="left:393.00px;top:968.75px;font:400 12.94px/1 'Liberation Sans',sans-serif;color:#d6d6d6;transform:scaleX(0.8574);">Occupancy density</span>
<span class="t" style="left:393.00px;top:1009.55px;font:400 12.94px/1 'Liberation Sans',sans-serif;color:#d6d6d6;transform:scaleX(0.8532);">View out (sky access)</span>
<span class="t" style="left:393.00px;top:1026.55px;font:400 12.94px/1 'Liberation Sans',sans-serif;color:#d6d6d6;transform:scaleX(0.8739);">View out (obstruction)</span>
<span class="t" style="left:729.60px;top:715.75px;font:400 12.94px/1 'Liberation Sans',sans-serif;color:#d6d6d6;transform:scaleX(0.8081);">86%</span>
<span class="t" style="left:729.60px;top:732.75px;font:400 12.94px/1 'Liberation Sans',sans-serif;color:#d6d6d6;transform:scaleX(0.7810);">71%</span>
<span class="t" style="left:729.60px;top:749.65px;font:400 12.94px/1 'Liberation Sans',sans-serif;color:#d6d6d6;transform:scaleX(0.8081);">62%</span>
<span class="t" style="left:729.60px;top:790.35px;font:400 12.94px/1 'Liberation Sans',sans-serif;color:#d6d6d6;transform:scaleX(0.8928);">+/-2</span>
<span class="t" style="left:729.60px;top:807.15px;font:400 12.94px/1 'Liberation Sans',sans-serif;color:#d6d6d6;transform:scaleX(0.8692);">5 months</span>
<span class="t" style="left:729.60px;top:848.35px;font:400 12.94px/1 'Liberation Sans',sans-serif;color:#d6d6d6;transform:scaleX(0.8835);">155 ug/m</span>
<span class="t" style="left:729.60px;top:865.35px;font:400 12.94px/1 'Liberation Sans',sans-serif;color:#d6d6d6;transform:scaleX(0.8650);">816 ppm</span>
<span class="t" style="left:729.60px;top:907.95px;font:400 12.94px/1 'Liberation Sans',sans-serif;color:#d6d6d6;transform:scaleX(0.8515);">100 % zones without risk</span>
<span class="t" style="left:729.60px;top:951.75px;font:400 12.94px/1 'Liberation Sans',sans-serif;color:#d6d6d6;transform:scaleX(0.8081);">73%</span>
<span class="t" style="left:729.60px;top:968.75px;font:400 12.94px/1 'Liberation Sans',sans-serif;color:#d6d6d6;transform:scaleX(0.8505);">0.77 m</span>
<span class="t" style="left:729.60px;top:1018.15px;font:400 12.94px/1 'Liberation Sans',sans-serif;color:#d6d6d6;transform:scaleX(0.8518);">69 Average obstruction</span>
<span class="t" style="left:778.30px;top:846.27px;font:400 9.01px/1 'Liberation Sans',sans-serif;color:#d6d6d6;">3</span>
<span class="t" style="left:764.40px;top:967.82px;font:400 9.30px/1 'Liberation Sans',sans-serif;color:#d6d6d6;transform:scaleX(0.7736);">2</span>
<span class="t" style="left:771.00px;top:968.75px;font:400 12.94px/1 'Liberation Sans',sans-serif;color:#d6d6d6;transform:scaleX(0.8175);">per person</span>
<span class="t" style="left:925.30px;top:715.75px;font:400 12.94px/1 'Liberation Sans',sans-serif;color:#d6d6d6;transform:scaleX(0.8539);">Best Practice</span>
<span class="t" style="left:925.30px;top:732.75px;font:400 12.94px/1 'Liberation Sans',sans-serif;color:#d6d6d6;transform:scaleX(0.8539);">Best Practice</span>
<span class="t" style="left:925.30px;top:749.65px;font:400 12.94px/1 'Liberation Sans',sans-serif;color:#d6d6d6;transform:scaleX(0.8539);">Best Practice</span>
<span class="t" style="left:925.30px;top:798.35px;font:400 12.94px/1 'Liberation Sans',sans-serif;color:#d6d6d6;transform:scaleX(0.8968);">Minimum</span>
<span class="t" style="left:925.30px;top:848.35px;font:400 12.94px/1 'Liberation Sans',sans-serif;color:#d6d6d6;transform:scaleX(0.8539);">Best Practice</span>
<span class="t" style="left:925.30px;top:865.35px;font:400 12.94px/1 'Liberation Sans',sans-serif;color:#d6d6d6;transform:scaleX(0.8968);">Minimum</span>
<span class="t" style="left:925.30px;top:907.95px;font:400 12.94px/1 'Liberation Sans',sans-serif;color:#d6d6d6;transform:scaleX(0.8410);">Exemplar</span>
<span class="t" style="left:925.30px;top:951.75px;font:400 12.94px/1 'Liberation Sans',sans-serif;color:#d6d6d6;transform:scaleX(0.8968);">Minimum</span>
<span class="t" style="left:925.30px;top:968.75px;font:400 12.94px/1 'Liberation Sans',sans-serif;color:#d6d6d6;transform:scaleX(0.8284);">Fails</span>
<span class="t" style="left:925.30px;top:1018.15px;font:400 12.94px/1 'Liberation Sans',sans-serif;color:#d6d6d6;transform:scaleX(0.8410);">Exemplar</span></div></div></body></html>
